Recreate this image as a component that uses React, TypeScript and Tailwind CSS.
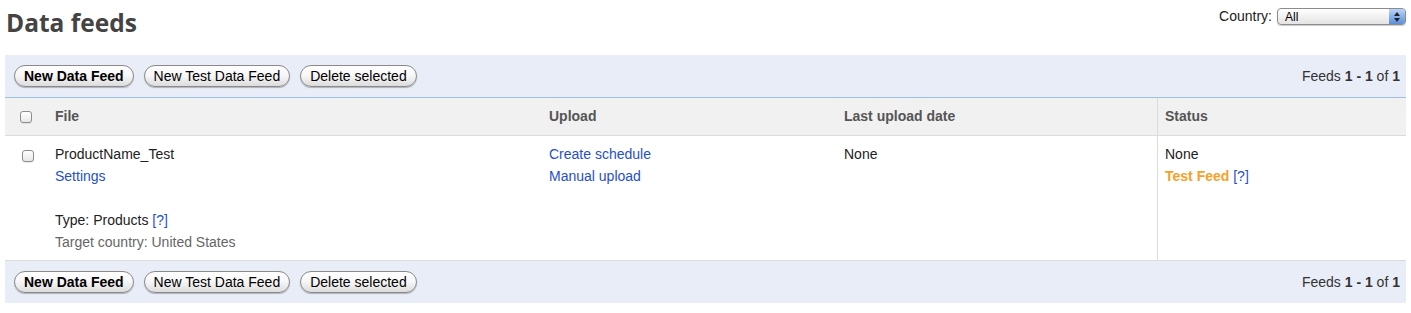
import type { ReactNode } from "react";

const font = { fontFamily: '"Liberation Sans", Arial, sans-serif' };

function PillButton({ children, bold }: { children: ReactNode; bold?: boolean }) {
  return (
    <button
      className={
        "h-[22px] rounded-full border border-[#8a8a8a] bg-gradient-to-b from-white via-[#f6f6f6] to-[#dcdcdc] px-[9px] text-[14px] leading-none text-black shadow-[0_1px_1px_rgba(0,0,0,0.25)] " +
        (bold ? "font-bold" : "")
      }
    >
      {children}
    </button>
  );
}

function Toolbar({ top }: { top?: boolean }) {
  return (
    <div
      className={
        "flex items-center justify-between bg-[#e9edf8] pl-[9px] pr-[6px] " +
        (top ? "h-[43px] border-b border-[#9ec0e8]" : "h-[42px]")
      }
    >
      <div className="flex items-center gap-[10px]">
        <PillButton bold>New Data Feed</PillButton>
        <PillButton>New Test Data Feed</PillButton>
        <PillButton>Delete selected</PillButton>
      </div>
      <div className="text-[14px] text-[#333]">
        Feeds <b>1 - 1</b> of <b>1</b>
      </div>
    </div>
  );
}

function Checkbox() {
  return (
    <span className="inline-block h-[12px] w-[12px] rounded-[3px] border border-[#8d8d8d] bg-gradient-to-b from-white to-[#e8e8e8] shadow-[0_1px_0_rgba(0,0,0,0.08)]" />
  );
}

const cols = "grid grid-cols-[42px_494px_295px_321px_1fr]";

export default function App() {
  return (
    <div className="bg-white px-[5px] text-[14px] text-[#222]" style={font}>
      <div className="flex h-[55px] items-start justify-between">
        <h1
          className="mt-[6px] pl-[1px] text-[24.5px] font-bold leading-[34px] text-[#444]"
          style={{ fontFamily: '"Open Sans", sans-serif' }}
        >
          Data feeds
        </h1>
        <div className="mt-[6px] flex items-center gap-[5px]">
          <span className="text-[14px] text-[#222]">Country:</span>
          <div className="flex h-[17px] w-[129px] items-center overflow-hidden rounded-[4px] border border-[#8c8c8c] bg-gradient-to-b from-white to-[#e4e4e4] shadow-[0_1px_1px_rgba(0,0,0,0.2)]">
            <span className="flex-1 pl-[7px] text-[12px] leading-none text-black">All</span>
            <span className="flex h-full w-[16px] flex-col items-center justify-center gap-[2px] bg-gradient-to-b from-[#b9d3f7] to-[#5c8fdc]">
              <svg width="6" height="4" viewBox="0 0 6 4">
                <path d="M3 0L6 4H0z" fill="#222" />
              </svg>
              <svg width="6" height="4" viewBox="0 0 6 4">
                <path d="M0 0H6L3 4z" fill="#222" />
              </svg>
            </span>
          </div>
        </div>
      </div>

      <Toolbar top />

      <div className={cols + " h-[38px] items-center border-b border-[#dcdcdc] bg-[#f1f1f1] font-bold text-[#555]"}>
        <div className="flex h-full items-center pl-[15px]">
          <Checkbox />
        </div>
        <div className="pl-[8px]">File</div>
        <div className="pl-[8px]">Upload</div>
        <div className="pl-[8px]">Last upload date</div>
        <div className="flex h-full items-center border-l border-[#dcdcdc] pl-[7px]">Status</div>
      </div>

      <div className={cols + " border-b border-[#dcdcdc] leading-[22px]"}>
        <div className="pl-[17px] pt-[10px]">
          <Checkbox />
        </div>
        <div className="py-[7px] pl-[8px]">
          <div>ProductName_Test</div>
          <div className="text-[#1f4fcc]">Settings</div>
          <div className="h-[22px]" />
          <div>
            Type: Products <span className="text-[#1f4fcc]">[?]</span>
          </div>
          <div className="text-[#666]">Target country: United States</div>
        </div>
        <div className="py-[7px] pl-[8px] text-[#1f4fcc]">
          <div>Create schedule</div>
          <div>Manual upload</div>
        </div>
        <div className="py-[7px] pl-[8px]">None</div>
        <div className="border-l border-[#dcdcdc] py-[7px] pl-[7px]">
          <div>None</div>
          <div>
            <span className="font-bold text-[#f7a02a]">Test Feed</span>{" "}
            <span className="text-[#1f4fcc]">[?]</span>
          </div>
        </div>
      </div>

      <Toolbar />
    </div>
  );
}
